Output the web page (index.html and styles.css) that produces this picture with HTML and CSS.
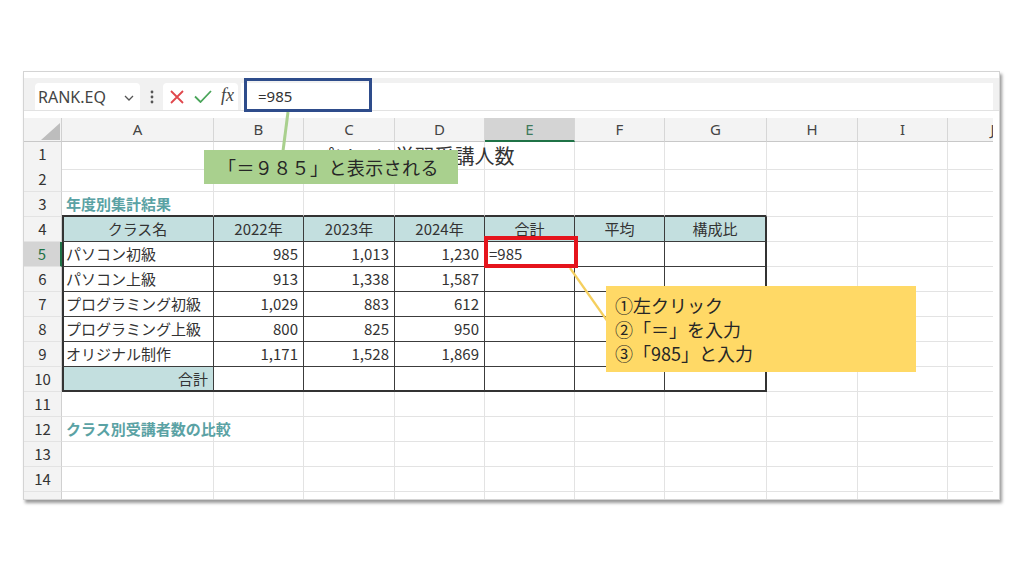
FILE: index.html
```html
<!DOCTYPE html>
<html lang="ja">
<head>
<meta charset="utf-8">
<title>Excel</title>
<link rel="stylesheet" href="styles.css">
</head>
<body>
<div class="frame">
  <div class="fbar">
    <div class="namebox">
      <span>RANK.EQ</span>
      <svg width="10" height="6" viewBox="0 0 10 6"><path d="M1 1 L5 5 L9 1" fill="none" stroke="#555" stroke-width="1.3"/></svg>
    </div>
    <div class="dots">
      <svg width="4" height="14" viewBox="0 0 4 14"><circle cx="2" cy="2" r="1.4" fill="#555"/><circle cx="2" cy="7" r="1.4" fill="#555"/><circle cx="2" cy="12" r="1.4" fill="#555"/></svg>
    </div>
    <div class="fxbox">
      <svg class="ic-x" width="14" height="14" viewBox="0 0 14 14"><path d="M1 1 L13 13 M13 1 L1 13" stroke="#e0474c" stroke-width="1.8" fill="none"/></svg>
      <svg class="ic-ok" width="18" height="13" viewBox="0 0 18 13"><path d="M1 6.5 L6.5 12 L17 1" stroke="#4aa55a" stroke-width="1.8" fill="none"/></svg>
      <span class="fx">fx</span>
    </div>
    <div class="finput">=985</div>
  </div>

  <div class="sheet">
    <div class="row hdr">
      <div class="corner"><svg width="37" height="23" viewBox="0 0 37 23"><polygon points="36,5 36,22 17,22" fill="#bdbdbd"/></svg></div>
      <div>A</div><div>B</div><div>C</div><div>D</div><div class="csel">E</div><div>F</div><div>G</div><div>H</div><div>I</div><div>J</div>
    </div>
    <div class="row">
      <div class="rn">1</div>
      <div class="titlecell"><span class="title">パソコン学習受講人数</span></div>
      <div></div><div></div><div></div><div></div><div></div><div></div><div></div><div></div><div></div>
    </div>
    <div class="row">
      <div class="rn">2</div>
      <div></div><div></div><div></div><div></div><div></div><div></div><div></div><div></div><div></div><div></div>
    </div>
    <div class="row">
      <div class="rn">3</div>
      <div class="sec above">年度別集計結果</div><div class="above"></div><div class="above"></div><div class="above"></div><div class="above"></div><div class="above"></div><div class="above"></div>
      <div></div><div></div><div></div>
    </div>
    <div class="row">
      <div class="rn">4</div>
      <div class="t ta th">クラス名</div><div class="t th">2022年</div><div class="t th">2023年</div><div class="t th">2024年</div><div class="t th">合計</div><div class="t th">平均</div><div class="t tg th">構成比</div>
      <div></div><div></div><div></div>
    </div>
    <div class="row">
      <div class="rn rsel">5</div>
      <div class="t ta">パソコン初級</div><div class="t num">985</div><div class="t num">1,013</div><div class="t num">1,230</div><div class="t">=985</div><div class="t"></div><div class="t tg"></div>
      <div></div><div></div><div></div>
    </div>
    <div class="row">
      <div class="rn">6</div>
      <div class="t ta">パソコン上級</div><div class="t num">913</div><div class="t num">1,338</div><div class="t num">1,587</div><div class="t"></div><div class="t"></div><div class="t tg"></div>
      <div></div><div></div><div></div>
    </div>
    <div class="row">
      <div class="rn">7</div>
      <div class="t ta">プログラミング初級</div><div class="t num">1,029</div><div class="t num">883</div><div class="t num">612</div><div class="t"></div><div class="t"></div><div class="t tg"></div>
      <div></div><div></div><div></div>
    </div>
    <div class="row">
      <div class="rn">8</div>
      <div class="t ta">プログラミング上級</div><div class="t num">800</div><div class="t num">825</div><div class="t num">950</div><div class="t"></div><div class="t"></div><div class="t tg"></div>
      <div></div><div></div><div></div>
    </div>
    <div class="row">
      <div class="rn">9</div>
      <div class="t ta">オリジナル制作</div><div class="t num">1,171</div><div class="t num">1,528</div><div class="t num">1,869</div><div class="t"></div><div class="t"></div><div class="t tg"></div>
      <div></div><div></div><div></div>
    </div>
    <div class="row">
      <div class="rn">10</div>
      <div class="t ta tl th num">合計</div><div class="t tl"></div><div class="t tl"></div><div class="t tl"></div><div class="t tl"></div><div class="t tl"></div><div class="t tl tg"></div>
      <div></div><div></div><div></div>
    </div>
    <div class="row">
      <div class="rn">11</div>
      <div></div><div></div><div></div><div></div><div></div><div></div><div></div><div></div><div></div><div></div>
    </div>
    <div class="row">
      <div class="rn">12</div>
      <div class="sec">クラス別受講者数の比較</div><div></div><div></div><div></div><div></div><div></div><div></div><div></div><div></div><div></div>
    </div>
    <div class="row">
      <div class="rn">13</div>
      <div></div><div></div><div></div><div></div><div></div><div></div><div></div><div></div><div></div><div></div>
    </div>
    <div class="row">
      <div class="rn">14</div>
      <div></div><div></div><div></div><div></div><div></div><div></div><div></div><div></div><div></div><div></div>
    </div>
    <div class="row">
      <div class="rn">15</div>
      <div></div><div></div><div></div><div></div><div></div><div></div><div></div><div></div><div></div><div></div>
    </div>
  </div>
</div>

<svg class="leaders" width="1024" height="576" viewBox="0 0 1024 576">
  <line x1="288" y1="112" x2="283" y2="151" stroke="#a9d08e" stroke-width="3"/>
  <line x1="570" y1="268" x2="608" y2="322" stroke="#f5cf5e" stroke-width="2.2"/>
</svg>
<div class="mark-blue"></div>
<div class="mark-red"></div>
<div class="callout green">「＝９８５」と表示される</div>
<div class="callout yellow">
  <div>①左クリック</div>
  <div>②「＝」を入力</div>
  <div>③「985」と入力</div>
</div>
</body>
</html>
```

FILE: styles.css
```css
html, body {
  margin: 0;
  padding: 0;
}
body {
  width: 1024px;
  height: 576px;
  position: relative;
  overflow: hidden;
  background: #ffffff;
  font-family: "Noto Sans CJK JP", "Noto Sans", sans-serif;
  color: #333333;
}
.frame {
  margin: 71px 0 0 23px;
  width: 977px;
  height: 429px;
  box-sizing: border-box;
  border: 1px solid #d4d4d4;
  box-shadow: 2px 3px 3px rgba(0, 0, 0, 0.4);
  overflow: hidden;
  background: #ffffff;
  padding-top: 6px;
}

/* formula bar */
.fbar {
  height: 33px;
  box-sizing: border-box;
  background: #f1f1f1;
  border-bottom: 1px solid #e2e2e2;
  padding: 5px 6px 0 11px;
  display: flex;
}
.namebox {
  width: 105px;
  box-sizing: border-box;
  background: #ffffff;
  border-radius: 4px 4px 0 0;
  display: flex;
  align-items: center;
  justify-content: space-between;
  padding: 0 6px 0 3px;
  font-family: "Noto Sans", sans-serif;
  font-size: 16px;
  color: #444444;
}
.namebox svg { margin-top: 2px; }
.dots {
  width: 23px;
  display: flex;
  align-items: center;
  justify-content: center;
}
.fxbox {
  width: 75px;
  background: #ffffff;
  border-radius: 4px 4px 0 0;
  display: flex;
  align-items: center;
  padding-left: 7px;
  box-sizing: border-box;
}
.ic-ok { margin-left: 10px; }
.fx {
  margin-left: 9px;
  font-family: "Liberation Serif", "DejaVu Serif", serif;
  font-style: italic;
  font-size: 18px;
  color: #444444;
  margin-top: -3px;
}
.finput {
  flex: 1;
  margin-left: 3px;
  background: #ffffff;
  padding-left: 17px;
  font-family: "Noto Sans", sans-serif;
  font-size: 15px;
  color: #333333;
  line-height: 26px;
}

/* sheet grid */
.sheet {
  width: 969px;
  height: 381px;
  overflow: hidden;
  margin-top: 7px;
}
.row {
  display: grid;
  grid-template-columns: 38px 152px 90px 91px 90px 90px 90px 102px 91px 90px 90px;
  height: 25px;
}
.row > div {
  box-sizing: border-box;
  border-right: 1px solid #e3e3e3;
  border-bottom: 1px solid #e3e3e3;
  font-size: 15px;
  line-height: 23px;
  white-space: nowrap;
  overflow: hidden;
  padding: 0 4px;
}
.row > .rn {
  background: #f3f3f3;
  text-align: center;
  padding: 0;
  border-right-color: #d0d0d0;
  color: #333333;
}
.row > .rsel {
  background: #d4d4d4;
  color: #1f7246;
  border-right: 2px solid #1f7246;
}

.hdr { height: 24px; }
.hdr > div {
  background: #f3f3f3;
  text-align: center;
  font-family: "Noto Sans", sans-serif;
  color: #444444;
  border-right-color: #d6d6d6;
  border-bottom: 1px solid #c8c8c8;
  line-height: 23px;
}
.hdr > .corner {
  padding: 0;
  border-right-color: #d0d0d0;
}
.hdr > .corner svg { display: block; }
.hdr > .csel {
  background: #d4d4d4;
  color: #3f7a5c;
  border-bottom: 2px solid #1f7246;
}

.row > .titlecell {
  overflow: visible;
  padding: 0;
  position: relative;
  z-index: 1;
}
.title {
  display: block;
  width: 705px;
  text-align: center;
  font-size: 20px;
  line-height: 27px;
  color: #333333;
}

.row > .sec {
  color: #5aa2a4;
  font-weight: 700;
  overflow: visible;
  position: relative;
  z-index: 1;
}
.row > .above { border-bottom: 2px solid #333333; }

.row > .t {
  border-right: 1px solid #3c3c3c;
  border-bottom: 1px solid #3c3c3c;
}
.row > .ta { border-left: 2px solid #333333; padding-left: 2px; }
.row > .tg { border-right: 2px solid #333333; }
.row > .tl { border-bottom: 2px solid #333333; }
.row > .th {
  background: #c3dfdf;
  text-align: center;
}
.row > .num {
  text-align: right;
  padding-right: 5px;
}

/* annotations */
.leaders {
  position: absolute;
  left: 0;
  top: 0;
  pointer-events: none;
  z-index: 2;
}
.mark-blue {
  position: absolute;
  z-index: 3;
  left: 244px;
  top: 78px;
  width: 128px;
  height: 34px;
  box-sizing: border-box;
  border: 3px solid #2e4c8b;
}
.mark-red {
  position: absolute;
  z-index: 3;
  left: 484px;
  top: 236px;
  width: 94px;
  height: 32px;
  box-sizing: border-box;
  border: 4px solid #e5141c;
}
.callout {
  position: absolute;
  z-index: 3;
  box-sizing: border-box;
  font-size: 18px;
  color: #262626;
}
.callout.green {
  left: 204px;
  top: 150px;
  width: 254px;
  height: 34px;
  background: #a9d08e;
  padding-left: 14px;
  line-height: 34px;
  letter-spacing: 0.4px;
}
.callout.yellow {
  left: 606px;
  top: 286px;
  width: 310px;
  height: 86px;
  background: #ffd966;
  padding: 7px 0 0 9px;
  line-height: 24px;
}
```
